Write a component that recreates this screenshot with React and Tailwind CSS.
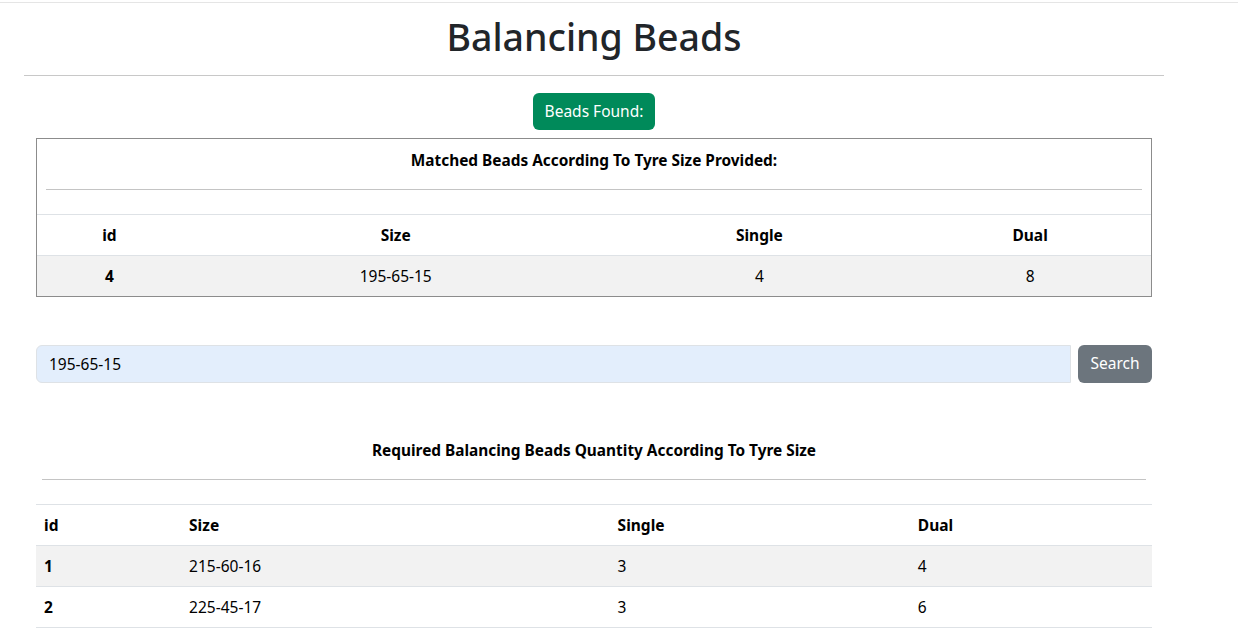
import React from "react";

const font = { fontFamily: '"Segoe UI", "Noto Sans", "Open Sans", sans-serif' };

const rows = [
  { id: 1, size: "215-60-16", single: 3, dual: 4 },
  { id: 2, size: "225-45-17", single: 3, dual: 6 },
];

const Cols = () => (
  <colgroup>
    <col className="w-[13%]" />
    <col className="w-[38.4%]" />
    <col className="w-[26.9%]" />
    <col className="w-[21.7%]" />
  </colgroup>
);

export default function App() {
  return (
    <div className="min-h-screen bg-white text-black" style={font}>
      <div className="mt-[2px] h-px bg-[#e5e5e5]" />

      <div className="ml-[24px] w-[1140px]">
        {/* title */}
        <h1 className="mt-[10px] text-center text-[37.5px] font-medium leading-[48px] text-[#212529]">
          Balancing Beads
        </h1>
        <hr className="mt-[14px] border-0 border-t border-[#c8c8c8]" />

        <div className="mt-[17px] flex justify-center">
          <button className="h-[37px] rounded-md bg-[#008a5a] px-[12px] text-[15.5px] text-white">
            Beads Found:
          </button>
        </div>

        {/* matched table */}
        <div className="mx-[12px] mt-[8px] border border-[#8c8c8c]">
          <div className="pt-[10px] text-center text-[15.4px] font-bold leading-[24px]">
            Matched Beads According To Tyre Size Provided:
          </div>
          <hr className="mx-[9px] mt-[16px] border-0 border-t border-[#c4c4c4]" />
          <table className="mt-[24px] w-full table-fixed border-collapse text-[15.5px] leading-[24px]">
            <Cols />
            <thead>
              <tr className="border-t border-b border-[#dee2e6]">
                <th className="p-2 text-center font-bold">id</th>
                <th className="p-2 text-center font-bold">Size</th>
                <th className="p-2 text-center font-bold">Single</th>
                <th className="p-2 text-center font-bold">Dual</th>
              </tr>
            </thead>
            <tbody>
              <tr className="bg-[#f2f2f2]">
                <th className="p-2 text-center font-bold">4</th>
                <td className="p-2 text-center">195-65-15</td>
                <td className="p-2 text-center">4</td>
                <td className="p-2 text-center">8</td>
              </tr>
            </tbody>
          </table>
        </div>

        {/* search */}
        <div className="mx-[12px] mt-[48px] flex gap-[7px]">
          <input
            readOnly
            value="195-65-15"
            className="h-[38px] flex-1 rounded-l-md border border-[#dee2e6] bg-[#e3eefc] px-[12px] text-[15.5px] text-black outline-none"
            style={font}
          />
          <button className="h-[38px] w-[74px] rounded-md bg-[#6c757d] text-[15.5px] text-white">
            Search
          </button>
        </div>

        {/* all sizes */}
        <div className="mx-[12px] mt-[56px]">
          <div className="text-center text-[15.4px] font-bold leading-[24px]">
            Required Balancing Beads Quantity According To Tyre Size
          </div>
          <hr className="mx-[6px] mt-[16px] border-0 border-t border-[#c4c4c4]" />
          <table className="mt-[24px] w-full table-fixed border-collapse text-[15.5px] leading-[24px]">
            <Cols />
            <thead>
              <tr className="border-t border-b border-[#dee2e6]">
                <th className="p-2 text-left font-bold">id</th>
                <th className="p-2 text-left font-bold">Size</th>
                <th className="p-2 text-left font-bold">Single</th>
                <th className="p-2 text-left font-bold">Dual</th>
              </tr>
            </thead>
            <tbody>
              {rows.map((r, i) => (
                <tr
                  key={r.id}
                  className={`border-b border-[#dee2e6] ${i % 2 === 0 ? "bg-[#f2f2f2]" : ""}`}
                >
                  <th className="p-2 text-left font-bold">{r.id}</th>
                  <td className="p-2">{r.size}</td>
                  <td className="p-2">{r.single}</td>
                  <td className="p-2">{r.dual}</td>
                </tr>
              ))}
            </tbody>
          </table>
        </div>
      </div>
    </div>
  );
}
